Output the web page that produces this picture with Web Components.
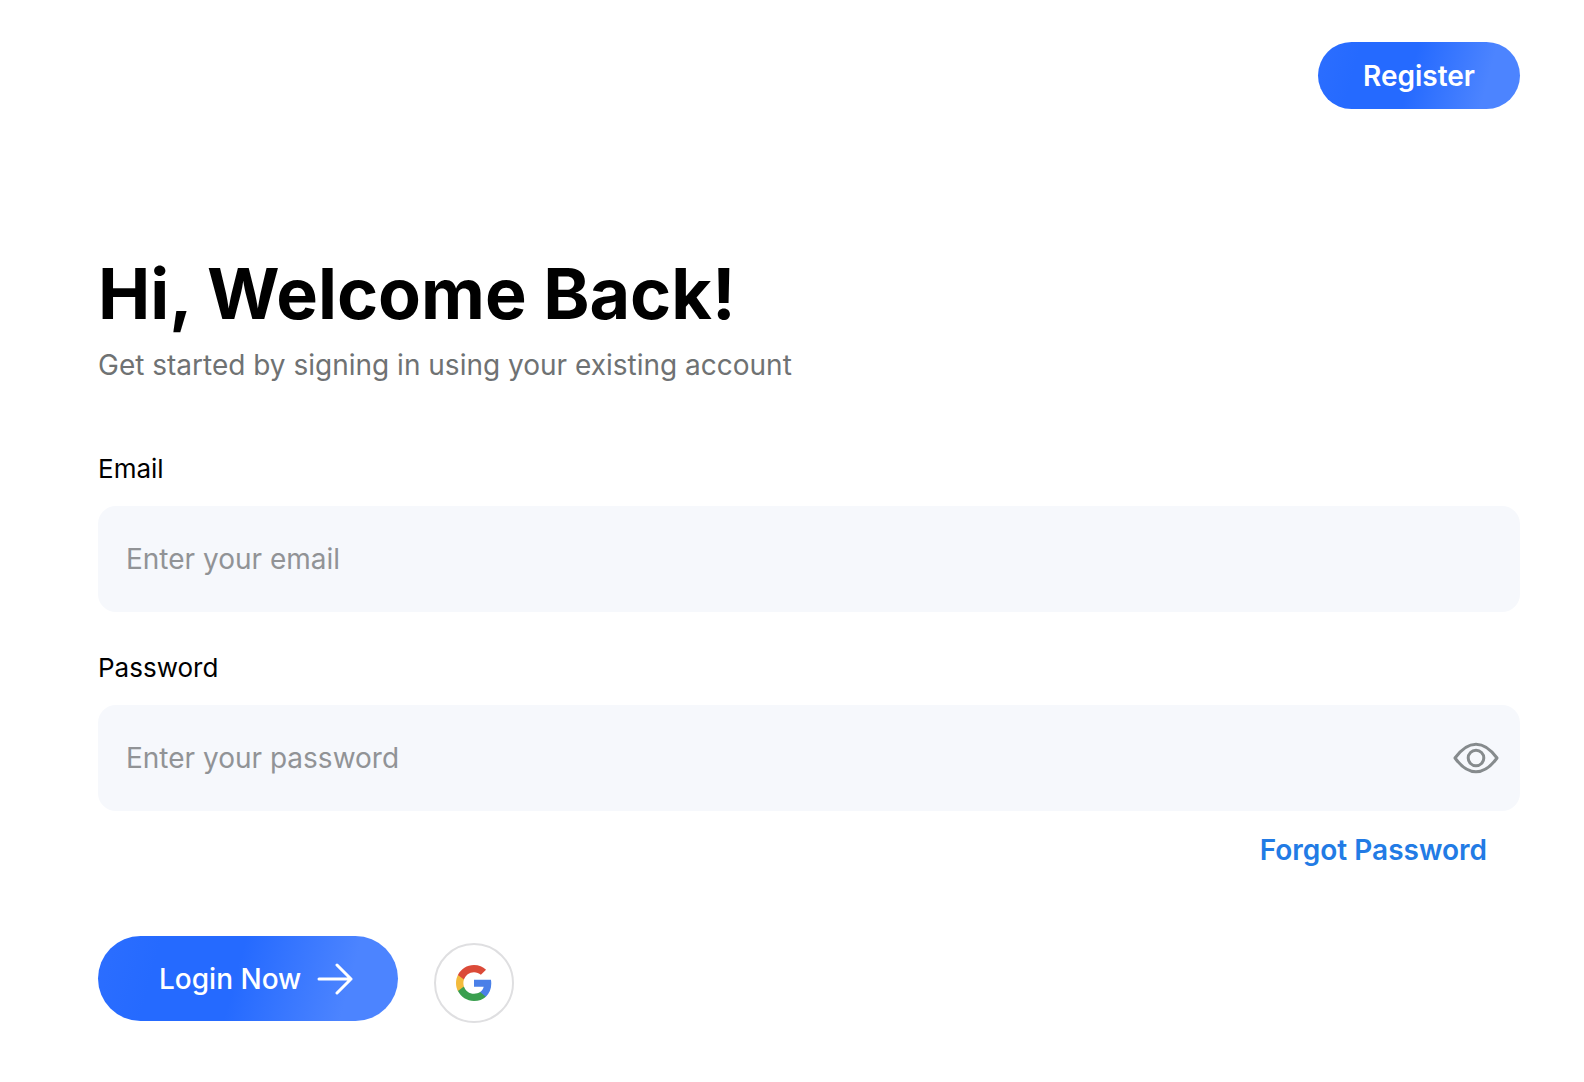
<!DOCTYPE html>
<html lang="en">
<head>
<meta charset="utf-8">
<meta name="viewport" content="width=device-width, initial-scale=1">
<title>Login</title>
<style>
  body { margin: 0; background: #fff; color: #000; font-family: Inter, "Liberation Sans", sans-serif; }
</style>
</head>
<body>
<login-page></login-page>

<template id="pill-button">
  <style>
    :host { display: block; }
    button {
      display: flex; align-items: center; justify-content: center; gap: 16px;
      box-sizing: border-box; width: 100%; height: var(--pill-height, 67px);
      padding: var(--pill-padding, 0 45px); border: 0; border-radius: 999px;
      background: linear-gradient(105deg, #2c6eff 0%, #256aff 20%, #256aff 46%, #4c84ff 82%, #4c84ff 100%);
      color: #fff; font: var(--pill-weight, 600) 28px/34px Inter, "Liberation Sans", sans-serif;
      white-space: nowrap; cursor: pointer;
    }
  </style>
  <button type="button"><slot></slot></button>
</template>

<template id="text-field">
  <style>
    :host { display: block; }
    label { display: block; font-size: 26px; line-height: 32px; }
    .box {
      display: flex; align-items: center; margin-top: 21px; height: 106px;
      box-sizing: border-box; padding: 0 21px 0 28px; border-radius: 18px; background: #f6f8fc;
    }
    input {
      flex: 1; min-width: 0; height: 100%; padding: 0; border: 0; outline: 0; background: none;
      color: #000; font: 400 28px/34px Inter, "Liberation Sans", sans-serif;
    }
    input::placeholder { color: #919396; opacity: 1; }
  </style>
  <label for="control"></label>
  <div class="box"><input id="control"><slot></slot></div>
</template>

<template id="reveal-button">
  <style>
    :host { display: block; }
    button { display: block; padding: 0; border: 0; background: none; cursor: pointer; }
    svg { display: block; }
  </style>
  <button type="button" aria-label="Show password">
    <svg width="46" height="32" viewBox="0 0 46 32" fill="none" stroke="#868b8d" stroke-width="3" stroke-linejoin="round">
      <path d="M2 16C8.500 7 14.500 2.200 23 2.200S37.500 7 44 16C37.500 25 31.500 29.800 23 29.800S8.500 25 2 16Z"/>
      <circle cx="23" cy="16" r="7.800"/>
    </svg>
  </button>
</template>

<template id="google-button">
  <style>
    :host { display: block; }
    button {
      display: grid; place-items: center; box-sizing: border-box; width: 80px; height: 80px;
      padding: 0; border: 2px solid #dfdfe1; border-radius: 50%; background: #fff; cursor: pointer;
    }
  </style>
  <button type="button" aria-label="Sign in with Google">
    <svg width="36" height="36" viewBox="2 2 44 44">
      <path fill="#4a80e8" d="M45.120 24.500c0-1.560-.14-3.060-.4-4.500H24v8.510h11.840c-.51 2.750-2.060 5.080-4.390 6.640v5.520h7.110c4.160-3.830 6.560-9.470 6.560-16.170z"/>
      <path fill="#3a9f4f" d="M24 46c5.940 0 10.920-1.970 14.560-5.330l-7.110-5.520c-1.970 1.320-4.490 2.100-7.450 2.100-5.730 0-10.580-3.870-12.310-9.070H4.340v5.700C7.960 41.070 15.400 46 24 46z"/>
      <path fill="#f3bb3c" d="M11.690 28.180C11.250 26.860 11 25.450 11 24s.25-2.860.69-4.180v-5.700H4.340C2.850 17.090 2 20.450 2 24s.85 6.910 2.340 9.880l7.350-5.700z"/>
      <path fill="#db4a38" d="M24 10.750c3.230 0 6.130 1.110 8.410 3.290l6.310-6.310C34.910 4.180 29.930 2 24 2 15.400 2 7.960 6.930 4.340 14.120l7.350 5.700c1.730-5.200 6.580-9.070 12.310-9.070z"/>
    </svg>
  </button>
</template>

<template id="login-page">
  <style>
    :host { display: block; }
    .page { display: flex; flex-direction: column; padding: 42px 64px 56px 98px; }
    header { display: flex; justify-content: flex-end; }
    h1 { margin: 142px 0 0; font-size: 70px; line-height: 86px; font-weight: 700; }
    .lead { margin: 11px 0 0; font-size: 28px; line-height: 34px; color: #6f7273; }
    form { display: flex; flex-direction: column; }
    .fields { display: flex; flex-direction: column; gap: 40px; margin-top: 71px; }
    .forgot {
      align-self: flex-end; margin: 22px 33px 0 0; color: #227be5; text-decoration: none;
      font-size: 28px; line-height: 34px; font-weight: 600;
    }
    .actions { display: flex; align-items: flex-start; gap: 36px; margin-top: 69px; }
    .login { --pill-height: 85px; --pill-padding: 0 45px 0 61px; --pill-weight: 500; }
    .login svg { display: block; }
    google-button { margin-top: 7px; }
  </style>
  <div class="page">
    <header><pill-button>Register</pill-button></header>
    <main>
      <h1>Hi, Welcome Back!</h1>
      <p class="lead">Get started by signing in using your existing account</p>
      <form>
        <div class="fields">
          <text-field label="Email" type="email" placeholder="Enter your email"></text-field>
          <text-field label="Password" type="password" placeholder="Enter your password"><reveal-button></reveal-button></text-field>
        </div>
        <a class="forgot" href="#forgot">Forgot Password</a>
        <div class="actions">
          <pill-button class="login">Login Now
            <svg width="36" height="32" viewBox="0 0 36 32" fill="none" stroke="#fff" stroke-width="3" stroke-linecap="round" stroke-linejoin="round">
              <path d="M2 16H34M20 2L34 16L20 30"/>
            </svg>
          </pill-button>
          <google-button></google-button>
        </div>
      </form>
    </main>
  </div>
</template>

<script>
  class TemplateElement extends HTMLElement {
    constructor() {
      super();
      const template = document.getElementById(this.localName);
      this.attachShadow({ mode: "open" }).append(template.content.cloneNode(true));
    }
  }

  class TextField extends TemplateElement {
    connectedCallback() {
      const input = this.shadowRoot.querySelector("input");
      this.shadowRoot.querySelector("label").textContent = this.getAttribute("label");
      input.type = this.getAttribute("type") || "text";
      input.placeholder = this.getAttribute("placeholder") || "";
      this.addEventListener("reveal-toggle", () => {
        input.type = input.type === "password" ? "text" : "password";
      });
    }
  }

  class RevealButton extends TemplateElement {
    connectedCallback() {
      this.shadowRoot.querySelector("button").addEventListener("click", () => {
        this.dispatchEvent(new CustomEvent("reveal-toggle", { bubbles: true }));
      });
    }
  }

  customElements.define("pill-button", class extends TemplateElement {});
  customElements.define("text-field", TextField);
  customElements.define("reveal-button", RevealButton);
  customElements.define("google-button", class extends TemplateElement {});
  customElements.define("login-page", class extends TemplateElement {});
</script>
</body>
</html>
